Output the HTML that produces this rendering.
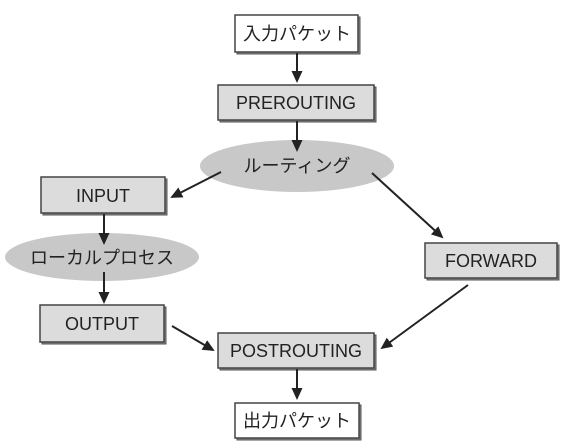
<!DOCTYPE html>
<html><head><meta charset="utf-8"><style>
html,body{margin:0;padding:0;background:#fff;}
svg{display:block;}
text{font-family:"Liberation Sans","Noto Sans CJK JP",sans-serif;font-size:18px;fill:#222;text-anchor:middle;dominant-baseline:central;}
</style></head><body>
<svg width="566" height="448" viewBox="0 0 566 448">
<defs>
<marker id="a" markerWidth="12" markerHeight="11" refX="10" refY="5.5" orient="auto" markerUnits="userSpaceOnUse">
<path d="M0,0 L12,5.5 L0,11 Z" fill="#222"/></marker>
</defs>
<g stroke="#555" stroke-width="1">
<rect x="237" y="17" width="123" height="37" fill="#888"/>
<rect x="220" y="87" width="156" height="35" fill="#888"/>
<rect x="43" y="179" width="124" height="36" fill="#888"/>
<rect x="42" y="307" width="124" height="37" fill="#888"/>
<rect x="220" y="335" width="156" height="35" fill="#888"/>
<rect x="427" y="245" width="132" height="35" fill="#888"/>
<rect x="237" y="405" width="124" height="35" fill="#888"/>
</g>
<g stroke="#444" stroke-width="1.5">
<rect x="235" y="15" width="123" height="37" fill="#fff"/>
<rect x="218" y="85" width="156" height="35" fill="#dcdcdc"/>
<rect x="41" y="177" width="124" height="36" fill="#dcdcdc"/>
<rect x="40" y="305" width="124" height="37" fill="#dcdcdc"/>
<rect x="218" y="333" width="156" height="35" fill="#dcdcdc"/>
<rect x="425" y="243" width="132" height="35" fill="#dcdcdc"/>
<rect x="235" y="403" width="124" height="35" fill="#fff"/>
</g>
<ellipse cx="297" cy="166" rx="97" ry="26" fill="#c8c8c8"/>
<ellipse cx="102" cy="257" rx="97" ry="24" fill="#c8c8c8"/>
<g stroke="#222" stroke-width="2" marker-end="url(#a)">
<line x1="297" y1="53" x2="297" y2="81"/>
<line x1="297" y1="121" x2="297" y2="150"/>
<line x1="221" y1="172" x2="172" y2="197"/>
<line x1="372" y1="173" x2="442" y2="237"/>
<line x1="104" y1="214" x2="104" y2="243"/>
<line x1="104" y1="272" x2="104" y2="302"/>
<line x1="172" y1="326" x2="213" y2="350"/>
<line x1="468" y1="285" x2="382" y2="348"/>
<line x1="297" y1="369" x2="297" y2="398"/>
</g>
<text x="297" y="34">入力パケット</text>
<text x="296" y="103">PREROUTING</text>
<text x="297" y="166">ルーティング</text>
<text x="103" y="196">INPUT</text>
<text x="102" y="258">ローカルプロセス</text>
<text x="102" y="324">OUTPUT</text>
<text x="296" y="351">POSTROUTING</text>
<text x="491" y="261">FORWARD</text>
<text x="297" y="421">出力パケット</text>
</svg>
</body></html>
